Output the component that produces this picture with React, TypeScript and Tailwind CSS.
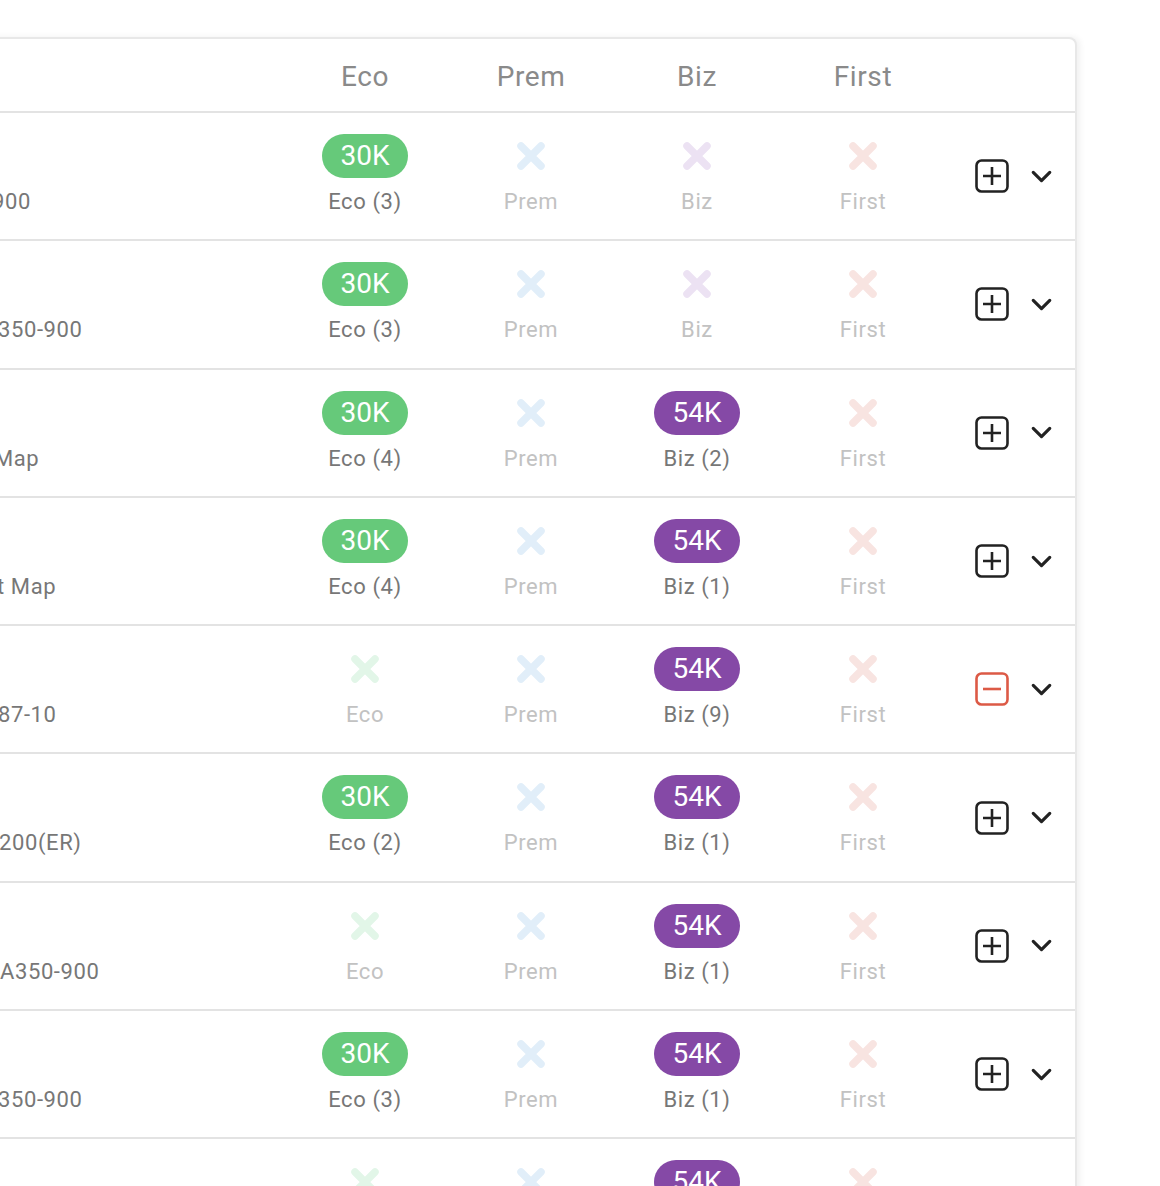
import React from 'react';
import { ChevronDown } from 'lucide-react';

type Cabin = 'eco' | 'prem' | 'biz' | 'first';

interface Fare {
  price: string;
  count: number;
}

interface Row {
  model: string;
  shift: string;
  eco?: Fare;
  prem?: Fare;
  biz?: Fare;
  first?: Fare;
  selected?: boolean;
}

const rows: Row[] = [
  { model: '900', shift: '-ml-[8px]', eco: { price: '30K', count: 3 } },
  { model: '350-900', shift: '-ml-[2px]', eco: { price: '30K', count: 3 } },
  { model: 'Map', shift: '-ml-[6px]', eco: { price: '30K', count: 4 }, biz: { price: '54K', count: 2 } },
  { model: 't Map', shift: '-ml-[3px]', eco: { price: '30K', count: 4 }, biz: { price: '54K', count: 1 } },
  { model: '87-10', shift: '-ml-[2px]', biz: { price: '54K', count: 9 }, selected: true },
  { model: '200(ER)', shift: '-ml-[1px]', eco: { price: '30K', count: 2 }, biz: { price: '54K', count: 1 } },
  { model: 'A350-900', shift: 'ml-0', biz: { price: '54K', count: 1 } },
  { model: '350-900', shift: '-ml-[2px]', eco: { price: '30K', count: 3 }, biz: { price: '54K', count: 1 } },
  { model: '', shift: 'ml-0', biz: { price: '54K', count: 1 } },
];

const cabins: { key: Cabin; label: string; pill: string; cross: string }[] = [
  { key: 'eco', label: 'Eco', pill: 'bg-[#66c97a]', cross: '#e2f6e8' },
  { key: 'prem', label: 'Prem', pill: 'bg-[#4a90d9]', cross: '#e1eef9' },
  { key: 'biz', label: 'Biz', pill: 'bg-[#8549a6]', cross: '#ece2f3' },
  { key: 'first', label: 'First', pill: 'bg-[#d9534f]', cross: '#f8e4e1' },
];

const Cross = ({ color }: { color: string }) => (
  <svg width="30" height="30" viewBox="0 0 30 30">
    <path d="M5 5 L25 25 M25 5 L5 25" stroke={color} strokeWidth="7.5" strokeLinecap="round" />
  </svg>
);

const PlusBox = () => (
  <svg width="36" height="36" viewBox="0 0 36 36" fill="none" stroke="#222" strokeWidth="2.6">
    <rect x="2.5" y="2.5" width="31" height="31" rx="5" />
    <path d="M18 9v18M9 18h18" />
  </svg>
);

const MinusBox = () => (
  <svg width="36" height="36" viewBox="0 0 36 36" fill="none" stroke="#dc5a46" strokeWidth="2.6">
    <rect x="2.5" y="2.5" width="31" height="31" rx="5" />
    <path d="M9 18h18" />
  </svg>
);

const Cell = ({ fare, label, pill, cross }: { fare?: Fare; label: string; pill: string; cross: string }) => (
  <div className="w-[166px] flex flex-col items-center pt-[21px]">
    {fare ? (
      <div className={`h-[44px] w-[86px] rounded-full ${pill} text-white text-[28px] leading-[44px] text-center`}>
        {fare.price}
      </div>
    ) : (
      <div className="h-[44px] flex items-center justify-center">
        <Cross color={cross} />
      </div>
    )}
    <div className={`mt-[9px] text-[22px] leading-[30px] tracking-[0.6px] ${fare ? 'text-[#777]' : 'text-[#c2c2c2]'}`}>
      {fare ? `${label} (${fare.count})` : label}
    </div>
  </div>
);

export default function App() {
  return (
    <div
      className="w-[1160px] h-[1186px] bg-white overflow-hidden pt-[37px]"
      style={{ fontFamily: 'Roboto, "Noto Sans", sans-serif' }}
    >
      <div className="w-[1097px] -ml-[20px] border-t-2 border-r-2 border-[#e8e8e8] rounded-tr-[8px] shadow-[3px_0_6px_rgba(0,0,0,0.06)] bg-white">
        <div className="flex h-[74px] border-b-2 border-[#e3e3e3]">
          <div className="w-[302px]" />
          {cabins.map((c) => (
            <div key={c.key} className="w-[166px] flex items-center justify-center pt-[3px] text-[28px] text-[#8a8a8a] tracking-[0.6px]">
              {c.label}
            </div>
          ))}
        </div>
        {rows.map((r, i) => (
          <div key={i} className="flex h-[128.3px] border-b-2 border-[#e3e3e3]">
            <div className="w-[302px] pl-[20px] pt-[74px] overflow-hidden">
              <div className={`text-[22px] leading-[30px] text-[#777] tracking-[0.6px] whitespace-nowrap ${r.shift}`}>{r.model}</div>
            </div>
            {cabins.map((c) => (
              <Cell key={c.key} fare={r[c.key]} label={c.label} pill={c.pill} cross={c.cross} />
            ))}
            <div className="flex items-center pl-[28px] gap-[15px]">
              {r.selected ? <MinusBox /> : <PlusBox />}
              <ChevronDown className="w-[33px] h-[33px] text-[#222]" strokeWidth={2.3} />
            </div>
          </div>
        ))}
      </div>
    </div>
  );
}
